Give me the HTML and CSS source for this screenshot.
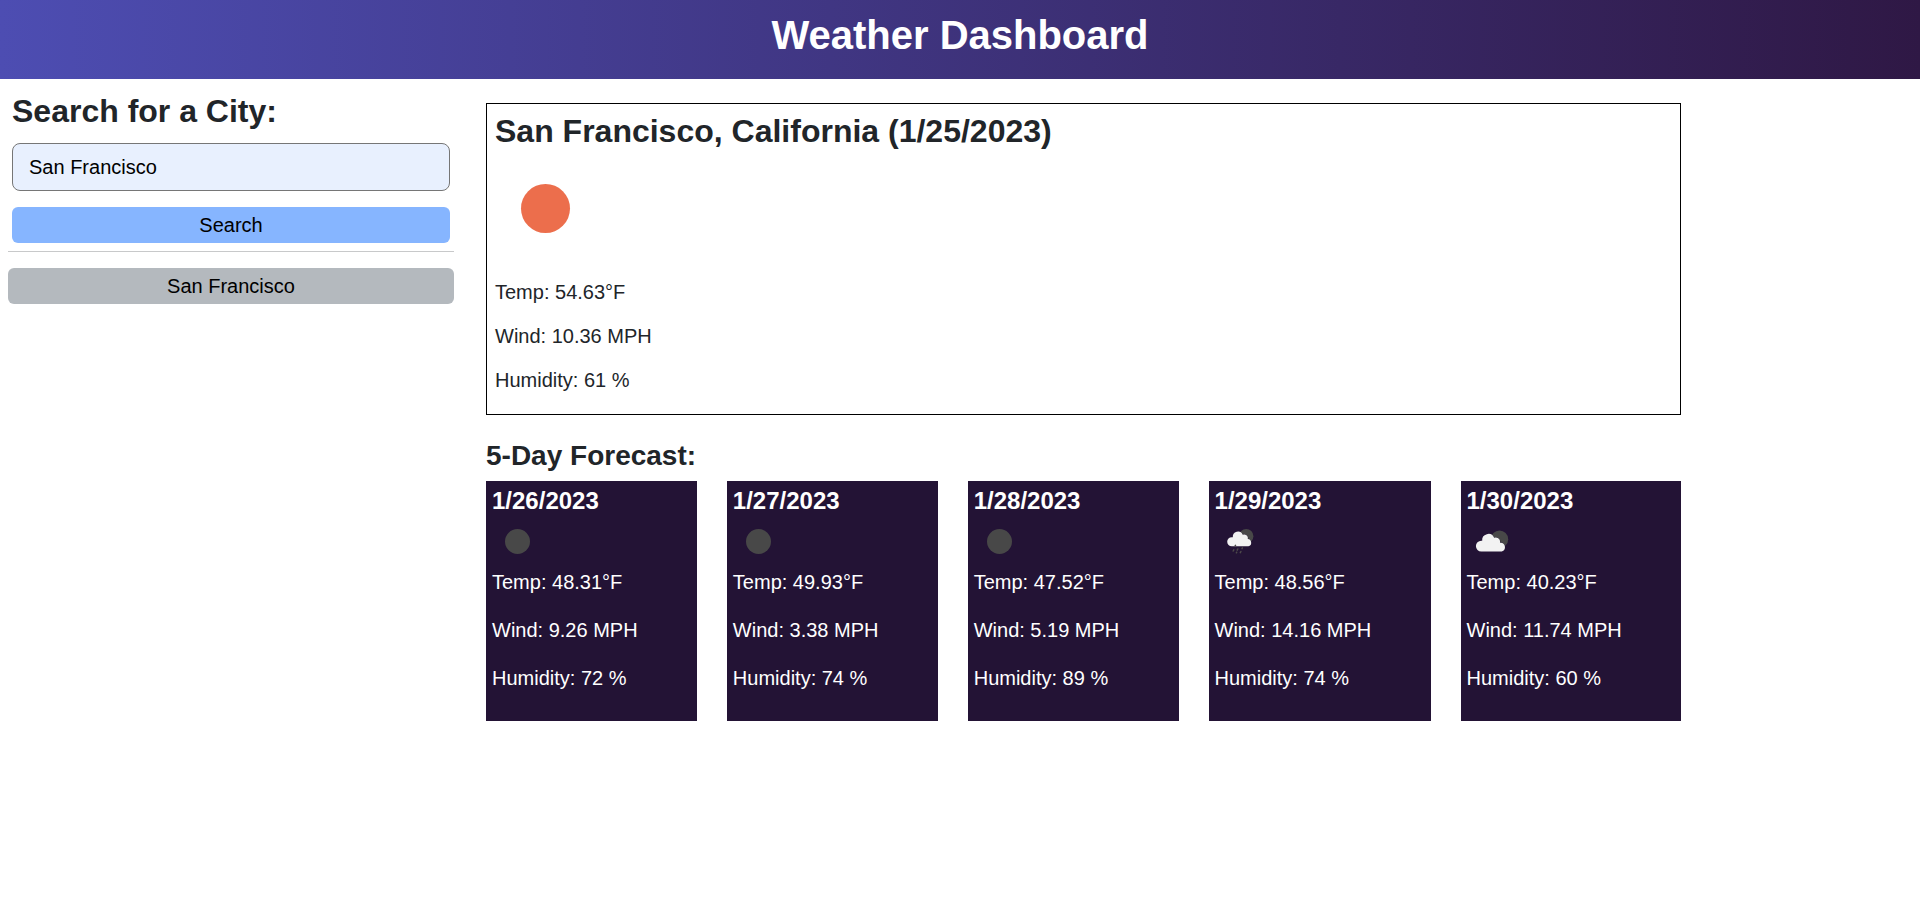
FILE: index.html
```html
<!DOCTYPE html>
<html lang="en">
<head>
<meta charset="utf-8">
<title>Weather Dashboard</title>
<link rel="stylesheet" href="styles.css">
</head>
<body>
<header class="header"><h1>Weather Dashboard</h1></header>
<div class="layout">
  <aside class="sidebar">
    <form class="search">
      <h2>Search for a City:</h2>
      <input class="search-input" type="text" value="San Francisco" aria-label="City">
      <button class="btn btn-search" type="button">Search</button>
    </form>
    <div class="history">
      <button class="btn btn-city" type="button">San Francisco</button>
    </div>
  </aside>
  <main class="main">
    <section class="current">
      <h2>San Francisco, California (1/25/2023)</h2>
      <svg class="current-icon" viewBox="0 0 100 100"><circle cx="50.5" cy="50.5" r="24.5" fill="#ec6e4c"/></svg>
      <p>Temp: 54.63°F</p>
      <p>Wind: 10.36 MPH</p>
      <p>Humidity: 61 %</p>
    </section>
    <h3 class="forecast-title">5-Day Forecast:</h3>
    <section class="forecast">
      <article class="day">
        <h4>1/26/2023</h4>
        <svg class="day-icon" viewBox="0 0 50 50"><circle cx="25.5" cy="25.5" r="12.5" fill="#484848"/></svg>
        <p>Temp: 48.31°F</p><p>Wind: 9.26 MPH</p><p>Humidity: 72 %</p>
      </article>
      <article class="day">
        <h4>1/27/2023</h4>
        <svg class="day-icon" viewBox="0 0 50 50"><circle cx="25.5" cy="25.5" r="12.5" fill="#484848"/></svg>
        <p>Temp: 49.93°F</p><p>Wind: 3.38 MPH</p><p>Humidity: 74 %</p>
      </article>
      <article class="day">
        <h4>1/28/2023</h4>
        <svg class="day-icon" viewBox="0 0 50 50"><circle cx="25.5" cy="25.5" r="12.5" fill="#484848"/></svg>
        <p>Temp: 47.52°F</p><p>Wind: 5.19 MPH</p><p>Humidity: 89 %</p>
      </article>
      <article class="day">
        <h4>1/29/2023</h4>
        <svg class="day-icon" viewBox="0 0 50 50">
          <circle cx="31.2" cy="20.2" r="7.2" fill="#484848"/>
          <path d="M16.7 30.2a4.500 4.500 0 0 1 0-9q.6 0 1.100.1a5.200 5.200 0 0 1 9.900-2.600q3.400-.9 4.700 1.600.7 1.200.4 2.800a3.600 3.600 0 0 1 .6 7.100z" fill="#f2f2f2" stroke="#231335" stroke-width=".5" paint-order="stroke"/>
          <g stroke="#4d4a4a" stroke-width="1.500" stroke-linecap="round"><path d="M20.500 29.300l-.3.600M22.800 33l-.6 1.100M27.400 31.900l-.4.700M18.800 33.800l-.6 1.200M21.700 36.200l-.3.600M25.900 35.500l-.6 1.200"/></g>
        </svg>
        <p>Temp: 48.56°F</p><p>Wind: 14.16 MPH</p><p>Humidity: 74 %</p>
      </article>
      <article class="day">
        <h4>1/30/2023</h4>
        <svg class="day-icon" viewBox="0 0 50 50">
          <circle cx="32.500" cy="23.200" r="8.700" fill="#484848"/>
          <path d="M14.300 35.500a5.400 5.400 0 0 1 0-10.800q.4 0 .9.100a6.200 6.200 0 0 1 11.900-3q3.700-.9 5.400 1.800.8 1.400.5 3.100a4.500 4.500 0 0 1 1.700 8.800z" fill="#f2f2f2" stroke="#231335" stroke-width=".5" paint-order="stroke"/>
        </svg>
        <p>Temp: 40.23°F</p><p>Wind: 11.74 MPH</p><p>Humidity: 60 %</p>
      </article>
    </section>
  </main>
</div>
</body>
</html>
```
FILE: styles.css
```css
* { box-sizing: border-box; }
body {
  margin: 0;
  background: #fff;
  color: #212529;
  font: 20px/28px "Liberation Sans", Arial, sans-serif;
}
h1, h2, h3, h4, p { margin: 0; }
.header {
  height: 79px;
  padding-top: 11px;
  background: linear-gradient(90deg, #4d4db2, #2f1845);
  color: #fff;
  text-align: center;
}
.header h1 { font-size: 40px; line-height: 48px; }
.layout { display: flex; align-items: flex-start; }
.sidebar { width: 462px; padding: 13px 8px 0; }
.search { padding: 0 4px 8px; border-bottom: 1px solid #c8c9ca; }
h2 { font-size: 32px; line-height: 38px; }
.search-input {
  display: block;
  width: 100%;
  height: 48px;
  margin: 13px 0 16px;
  padding: 0 16px;
  border: 1px solid #767676;
  border-radius: 8px;
  background: #e8f0fe;
  color: #000;
  font: inherit;
}
.btn {
  display: block;
  width: 100%;
  height: 36px;
  padding: 0;
  border: 0;
  border-radius: 6px;
  color: #000;
  font: inherit;
}
.btn-search { background: #86b5ff; }
.history { padding-top: 16px; }
.btn-city { background: #b4b9be; }
.main { width: 1195px; margin: 24px 0 0 24px; }
.current {
  height: 312px;
  padding: 8px;
  border: 1px solid #000;
}
.current-icon { display: block; width: 100px; height: 100px; margin: 8px 0 20px; }
.current p { margin-bottom: 16px; }
.forecast-title { margin: 24px 0 8px; font-size: 28px; line-height: 34px; }
.forecast { display: flex; gap: 30px; }
.day {
  flex: 1 1 auto;
  height: 240px;
  padding: 5px 6px;
  background: #231335;
  color: #fff;
}
.day h4 { font-size: 24px; line-height: 29px; }
.day-icon { display: block; width: 50px; height: 50px; margin: 1px 0 2px; }
.day p { margin-bottom: 20px; }
```
